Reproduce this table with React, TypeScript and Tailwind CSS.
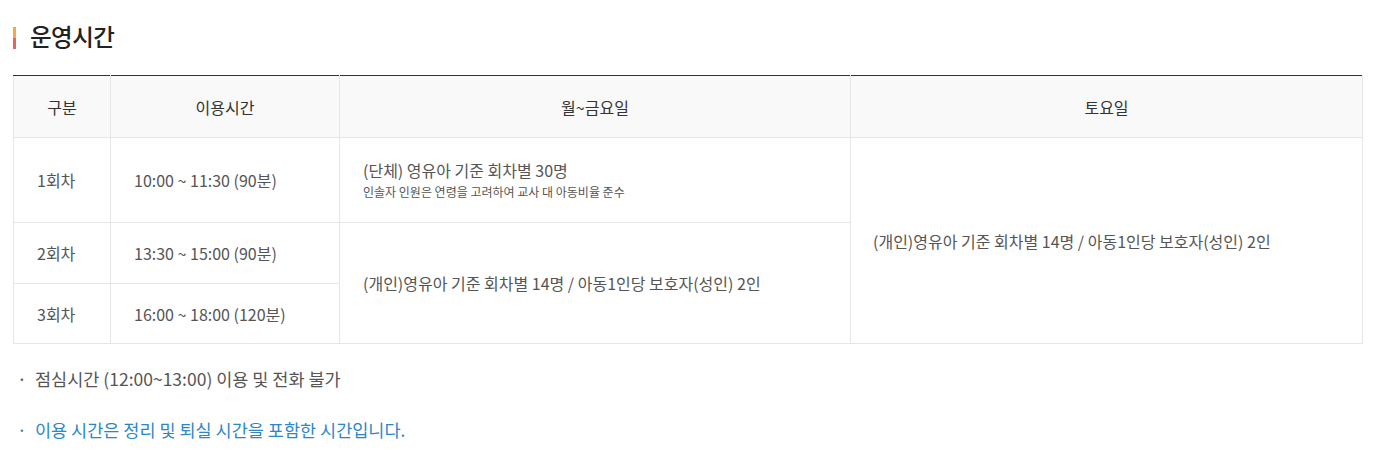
const font = { fontFamily: '"Noto Sans CJK KR", "Noto Sans", sans-serif' };

const rows = [
  { no: "1회차", time: "10:00 ~ 11:30 (90분)" },
  { no: "2회차", time: "13:30 ~ 15:00 (90분)" },
  { no: "3회차", time: "16:00 ~ 18:00 (120분)" },
];

const personal = "(개인)영유아 기준 회차별 14명 / 아동1인당 보호자(성인) 2인";

export default function App() {
  return (
    <div className="bg-white w-[1377px] h-[471px] px-[13px] pt-[20px] text-[#555]" style={font}>
      {/* section title */}
      <div className="flex items-center h-[34px]">
        <span className="flex flex-col w-[3px] h-[22px] mt-[2px]">
          <span className="flex-1 bg-[#f2a94a]" />
          <span className="flex-1 bg-[#e8626a]" />
        </span>
        <h2 className="ml-[14px] text-[23.5px] font-medium text-[#222] tracking-[-0.5px]">운영시간</h2>
      </div>

      <table className="mt-[21px] w-[1350px] border-collapse table-fixed text-[16px]">
        <colgroup>
          <col className="w-[97px]" />
          <col className="w-[229px]" />
          <col className="w-[511px]" />
          <col className="w-[512px]" />
        </colgroup>
        <thead>
          <tr className="h-[62px] bg-[#f9f9f9] text-[#333]">
            <th className="border border-[#e6e6e6] border-t-[#333] font-normal">구분</th>
            <th className="border border-[#e6e6e6] border-t-[#333] font-normal">이용시간</th>
            <th className="border border-[#e6e6e6] border-t-[#333] font-normal">월~금요일</th>
            <th className="border border-[#e6e6e6] border-t-[#333] font-normal">토요일</th>
          </tr>
        </thead>
        <tbody>
          <tr className="h-[85px]">
            <td className="border border-[#e6e6e6] pl-[23px]">{rows[0].no}</td>
            <td className="border border-[#e6e6e6] pl-[23px]">{rows[0].time}</td>
            <td className="border border-[#e6e6e6] pl-[23px]">
              <p className="leading-[22px]">(단체) 영유아 기준 회차별 30명</p>
              <p className="text-[12px] leading-[18px] mt-[2px]">인솔자 인원은 연령을 고려하여 교사 대 아동비율 준수</p>
            </td>
            <td rowSpan={3} className="border border-[#e6e6e6] pl-[22px]">{personal}</td>
          </tr>
          <tr className="h-[61px]">
            <td className="border border-[#e6e6e6] pl-[23px]">{rows[1].no}</td>
            <td className="border border-[#e6e6e6] pl-[23px]">{rows[1].time}</td>
            <td rowSpan={2} className="border border-[#e6e6e6] pl-[23px]">{personal}</td>
          </tr>
          <tr className="h-[60px]">
            <td className="border border-[#e6e6e6] pl-[23px]">{rows[2].no}</td>
            <td className="border border-[#e6e6e6] pl-[23px]">{rows[2].time}</td>
          </tr>
        </tbody>
      </table>

      <ul className="mt-[22px] text-[17.5px] leading-[26px]">
        <li className="flex">
          <span className="w-[22px] pl-[4px]">·</span>
          <span>점심시간 (12:00~13:00) 이용 및 전화 불가</span>
        </li>
        <li className="flex mt-[25px] text-[#2b87c9]">
          <span className="w-[22px] pl-[4px]">·</span>
          <span>이용 시간은 정리 및 퇴실 시간을 포함한 시간입니다.</span>
        </li>
      </ul>
    </div>
  );
}
